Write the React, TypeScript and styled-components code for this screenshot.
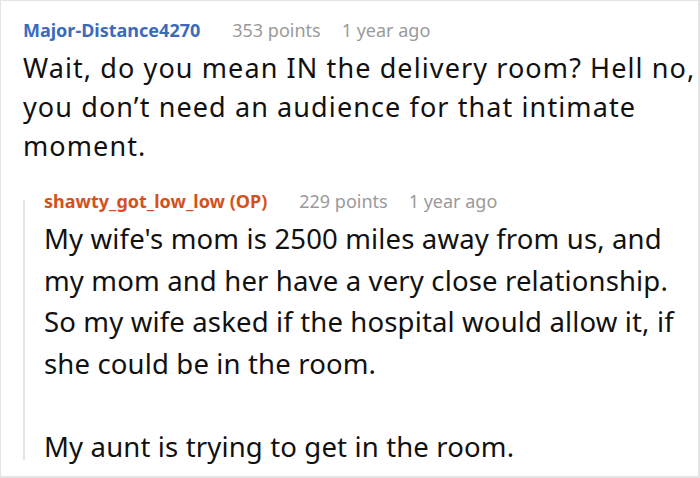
import styled, { createGlobalStyle } from "styled-components";

const GlobalStyle = createGlobalStyle`
  html, body {
    margin: 0;
    padding: 0;
    background: #fff;
  }
  * {
    box-sizing: border-box;
  }
`;

const Frame = styled.div`
  width: 700px;
  height: 478px;
  border: 1px solid #e4e4e4;
  border-right-width: 2px;
  border-bottom-width: 2px;
  padding: 17px 0 0 22px;
  overflow: hidden;
  font-family: "Noto Sans", "Open Sans", sans-serif;
`;

const Comment = styled.div`
  display: flex;
  flex-direction: column;
`;

const Meta = styled.div`
  display: flex;
  align-items: baseline;
  gap: 21px;
  font-size: 18px;
  line-height: 24px;
`;

const Author = styled.span<{ $op?: boolean }>`
  font-weight: 700;
  color: ${(p) => (p.$op ? "#d4511c" : "#3a6bbb")};
  margin-right: 11px;
`;

const Info = styled.span`
  color: #9a9a9a;
`;

const Body = styled.p`
  margin: 6px 0 0;
  font-size: 27px;
  letter-spacing: 1.1px;
  line-height: 39px;
  color: #111;
  white-space: nowrap;
`;

const ReplyBody = styled(Body)`
  margin-top: 5px;
  font-size: 27.5px;
  letter-spacing: 0.15px;
  line-height: 41.5px;
`;

const Replies = styled.div`
  position: relative;
  margin-top: 24px;
  padding-left: 21px;

  &::before {
    content: "";
    position: absolute;
    left: 0;
    top: 11px;
    bottom: 7px;
    width: 2px;
    background: #e4e4e4;
  }
`;

const Gap = styled.span`
  display: block;
  height: 41.5px;
`;

export default function App() {
  return (
    <>
      <GlobalStyle />
      <Frame>
        <Comment>
          <Meta>
            <Author>Major-Distance4270</Author>
            <Info>353 points</Info>
            <Info>1 year ago</Info>
          </Meta>
          <Body>
            Wait, do you mean IN the delivery room? Hell no,
            <br />
            you don’t need an audience for that intimate
            <br />
            moment.
          </Body>
        </Comment>
        <Replies>
          <Comment>
            <Meta>
              <Author $op>shawty_got_low_low (OP)</Author>
              <Info>229 points</Info>
              <Info>1 year ago</Info>
            </Meta>
            <ReplyBody>
              My wife's mom is 2500 miles away from us, and
              <br />
              my mom and her have a very close relationship.
              <br />
              So my wife asked if the hospital would allow it, if
              <br />
              she could be in the room.
              <Gap />
              My aunt is trying to get in the room.
            </ReplyBody>
          </Comment>
        </Replies>
      </Frame>
    </>
  );
}
